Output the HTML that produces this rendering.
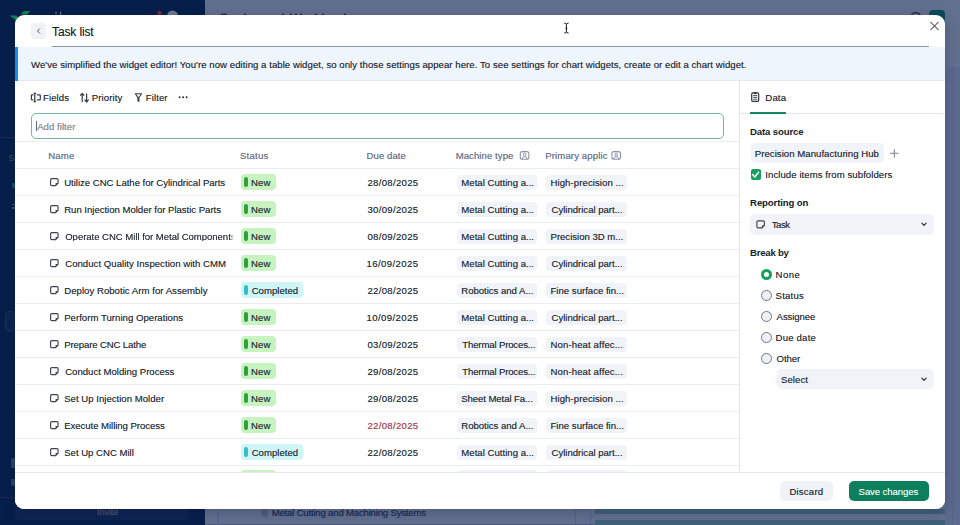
<!DOCTYPE html>
<html><head><meta charset="utf-8">
<style>
*{box-sizing:border-box;margin:0;padding:0}
html,body{width:960px;height:525px;overflow:hidden}
body{position:relative;background:#62708f;font-family:"Liberation Sans",sans-serif;color:#262b36}
.a{position:absolute}
.t{position:absolute;white-space:nowrap;line-height:1;text-shadow:0 0 0.5px rgba(30,35,45,0.5)}
svg{position:absolute;overflow:visible}
</style></head><body>
<div class="a" style="left:0px;top:0px;width:205.00px;height:525.00px;background:#061f4a"></div>
<div class="a" style="left:945px;top:67px;width:15.00px;height:458.00px;background:#5d6a8f"></div>
<div class="a" style="left:952px;top:67px;width:1.00px;height:458.00px;background:#58658a"></div>
<div class="a" style="left:595px;top:509px;width:350.00px;height:5.00px;background:#41607a"></div>
<div class="a" style="left:595px;top:520px;width:350.00px;height:5.00px;background:#41607a"></div>
<div class="a" style="left:574.5px;top:509px;width:16.00px;height:16.00px;border:1px solid #56638a"></div>
<div class="a" style="left:205px;top:523.5px;width:390.00px;height:1.50px;background:#4d597a"></div>
<div class="a" style="left:217px;top:509px;width:1.50px;height:16.00px;background:#5a6892"></div>
<div class="a" style="left:260.8px;top:509.2px;width:7.70px;height:7.70px;background:#525d80;border-radius:50%"></div>
<div class="t" style="left:271.70px;top:508.17px;font-size:9.6px;color:#1a2a5e;font-weight:400;letter-spacing:-0.197px;">Metal Cutting and Machining Systems</div>
<div class="a" style="left:15px;top:503px;width:173.00px;height:17.00px;background:#0e2453;border-radius:3px"></div>
<div class="t" style="left:97.00px;top:506.84px;font-size:9.4px;color:#4f5f86;font-weight:400;letter-spacing:-0.200px;">Invite</div>
<div class="a" style="left:0px;top:136.5px;width:205.00px;height:1.00px;background:#1b2d57"></div>
<div class="t" style="left:8.50px;top:153.88px;font-size:9px;color:#3d4d72;font-weight:400;">S</div>
<div class="a" style="left:11.5px;top:183px;width:3.50px;height:5.00px;background:#18505a;border-radius:1px"></div>
<div class="a" style="left:12px;top:203.5px;width:3.00px;height:1.50px;background:#3d4d72"></div>
<div class="a" style="left:12px;top:207px;width:3.00px;height:1.50px;background:#3d4d72"></div>
<div class="a" style="left:4.5px;top:311px;width:11.50px;height:21.00px;background:#0c2552;border:1px solid #13305e;border-radius:4px"></div>
<div class="a" style="left:11px;top:458px;width:4.00px;height:10.00px;background:#2f4068;border-radius:1px"></div>
<div class="a" style="left:11px;top:479px;width:4.00px;height:7.00px;background:#2f4068;border-radius:1px"></div>
<div class="a" style="left:0px;top:497px;width:205.00px;height:1.00px;background:#1b2d57"></div>
<svg style="left:0;top:0" width="960" height="525"><path d="M9.7 15.6 H16.3 L18.5 18.5 L16.5 21 Z" fill="#11855c"/><path d="M23.7 10.9 H30 L27.5 14.4 H20.6 Z" fill="#11855c"/><circle cx="56" cy="12.8" r="1" fill="#5d6a88"/><rect x="60" y="11.5" width="1.3" height="3.5" fill="#5d6a88"/><circle cx="159.5" cy="13" r="2.2" fill="#7d2647"/><circle cx="172.5" cy="16" r="5.5" fill="#6f7890"/><circle cx="915.8" cy="17.5" r="5" fill="none" stroke="#1f2b57" stroke-width="1.3"/><rect x="929" y="10" width="16" height="16" rx="4" fill="#0a4a5c"/><circle cx="222" cy="14.3" r="0.9" fill="#0d1636"/><circle cx="224" cy="14.3" r="0.9" fill="#0d1636"/><circle cx="226" cy="14.3" r="0.9" fill="#0d1636"/><circle cx="245" cy="14.3" r="0.9" fill="#0d1636"/><circle cx="283" cy="14.3" r="0.9" fill="#0d1636"/><circle cx="291" cy="14.3" r="0.9" fill="#0d1636"/><circle cx="296" cy="14.3" r="0.9" fill="#0d1636"/><circle cx="301" cy="14.3" r="0.9" fill="#0d1636"/><circle cx="316" cy="14.3" r="0.9" fill="#0d1636"/><circle cx="323" cy="14.3" r="0.9" fill="#0d1636"/><circle cx="345" cy="14.3" r="0.9" fill="#0d1636"/></svg>
<div class="a" style="left:15px;top:15px;width:930.00px;height:494.00px;background:#fff;border-radius:9px;box-shadow:0 3px 14px rgba(10,20,50,.25)"></div>
<div class="a" style="left:31px;top:23px;width:15.00px;height:15.50px;background:#eff2f6;border-radius:4px"></div>
<div class="t" style="left:52.00px;top:25.64px;font-size:12px;color:#161b26;font-weight:400;letter-spacing:-0.125px;text-shadow:0 0 0.3px rgba(30,35,45,.4)">Task list</div>
<div class="a" style="left:52px;top:46px;width:877.00px;height:1.00px;background:#8f96a5"></div>
<div class="a" style="left:15px;top:47px;width:930.00px;height:34.00px;background:#eef5fd"></div>
<div class="a" style="left:15px;top:47px;width:3.00px;height:34.00px;background:#1a8cf0"></div>
<div class="a" style="left:18px;top:80px;width:927.00px;height:1.00px;background:#e4e9ef"></div>
<div class="t" style="left:31.00px;top:59.67px;font-size:9.6px;color:#262b36;font-weight:400;letter-spacing:0.048px;">We've simplified the widget editor! You're now editing a table widget, so only those settings appear here. To see settings for chart widgets, create or edit a chart widget.</div>
<div class="t" style="left:43.10px;top:92.87px;font-size:9.6px;color:#262b36;font-weight:400;letter-spacing:0.060px;">Fields</div>
<div class="t" style="left:91.80px;top:92.87px;font-size:9.6px;color:#262b36;font-weight:400;letter-spacing:0.086px;">Priority</div>
<div class="t" style="left:145.80px;top:92.87px;font-size:9.6px;color:#262b36;font-weight:400;letter-spacing:0.080px;">Filter</div>
<div class="a" style="left:30.5px;top:112.5px;width:693.20px;height:26.00px;border:1.5px solid #72b9a0;border-radius:5px"></div>
<div class="a" style="left:36px;top:120.5px;width:1.00px;height:10.80px;background:#5a6f95"></div>
<div class="t" style="left:37.20px;top:121.87px;font-size:9.6px;color:#8d95a4;font-weight:400;letter-spacing:0.033px;">Add filter</div>
<div class="a" style="left:15px;top:141px;width:724.00px;height:1.00px;background:#e9edf2"></div>
<div class="a" style="left:15px;top:168px;width:724.00px;height:1.00px;background:#e9edf2"></div>
<div class="a" style="left:15px;top:195px;width:724.00px;height:1.00px;background:#e9edf2"></div>
<div class="a" style="left:15px;top:222px;width:724.00px;height:1.00px;background:#e9edf2"></div>
<div class="a" style="left:15px;top:249px;width:724.00px;height:1.00px;background:#e9edf2"></div>
<div class="a" style="left:15px;top:276px;width:724.00px;height:1.00px;background:#e9edf2"></div>
<div class="a" style="left:15px;top:303px;width:724.00px;height:1.00px;background:#e9edf2"></div>
<div class="a" style="left:15px;top:330px;width:724.00px;height:1.00px;background:#e9edf2"></div>
<div class="a" style="left:15px;top:357px;width:724.00px;height:1.00px;background:#e9edf2"></div>
<div class="a" style="left:15px;top:384px;width:724.00px;height:1.00px;background:#e9edf2"></div>
<div class="a" style="left:15px;top:411px;width:724.00px;height:1.00px;background:#e9edf2"></div>
<div class="a" style="left:15px;top:438px;width:724.00px;height:1.00px;background:#e9edf2"></div>
<div class="a" style="left:15px;top:465px;width:724.00px;height:1.00px;background:#e9edf2"></div>
<div class="a" style="left:739px;top:81px;width:1.00px;height:391.00px;background:#e3e7ec"></div>
<div class="t" style="left:48.25px;top:151.17px;font-size:9.6px;color:#6e7894;font-weight:400;letter-spacing:0.167px;">Name</div>
<div class="t" style="left:240.00px;top:151.17px;font-size:9.6px;color:#6e7894;font-weight:400;letter-spacing:0.220px;">Status</div>
<div class="t" style="left:366.50px;top:151.17px;font-size:9.6px;color:#6e7894;font-weight:400;letter-spacing:0.071px;">Due date</div>
<div class="t" style="left:455.70px;top:151.17px;font-size:9.6px;color:#6e7894;font-weight:400;letter-spacing:0.055px;">Machine type</div>
<div class="t" style="left:545.25px;top:151.17px;font-size:9.6px;color:#6e7894;font-weight:400;letter-spacing:0.112px;">Primary applic</div>
<div class="t" style="left:64.20px;top:177.57px;font-size:9.6px;color:#262b36;font-weight:400;letter-spacing:-0.029px;">Utilize CNC Lathe for Cylindrical Parts</div>
<div class="a" style="left:241px;top:174.2px;width:35.00px;height:15.60px;background:#c6f3c0;border-radius:4px"></div>
<div class="a" style="left:243.7px;top:176.7px;width:4.00px;height:10.70px;background:#30a03b;border-radius:2px"></div>
<div class="t" style="left:251.00px;top:177.57px;font-size:9.6px;color:#262b36;font-weight:400;letter-spacing:0.100px;">New</div>
<div class="t" style="left:367.50px;top:177.57px;font-size:9.6px;color:#262b36;font-weight:400;letter-spacing:0.289px;">28/08/2025</div>
<div class="a" style="left:457px;top:174.6px;width:80.40px;height:15.20px;background:#f0f3f7;border-radius:4px"></div>
<div class="t" style="left:461.30px;top:177.57px;font-size:9.6px;color:#262b36;font-weight:400;letter-spacing:0.012px;">Metal Cutting a...</div>
<div class="a" style="left:546.4px;top:174.6px;width:80.50px;height:15.20px;background:#f0f3f7;border-radius:4px"></div>
<div class="t" style="left:550.50px;top:177.57px;font-size:9.6px;color:#262b36;font-weight:400;letter-spacing:0.074px;">High-precision ...</div>
<div class="t" style="left:64.20px;top:204.57px;font-size:9.6px;color:#262b36;font-weight:400;letter-spacing:-0.027px;">Run Injection Molder for Plastic Parts</div>
<div class="a" style="left:241px;top:201.2px;width:35.00px;height:15.60px;background:#c6f3c0;border-radius:4px"></div>
<div class="a" style="left:243.7px;top:203.7px;width:4.00px;height:10.70px;background:#30a03b;border-radius:2px"></div>
<div class="t" style="left:251.00px;top:204.57px;font-size:9.6px;color:#262b36;font-weight:400;letter-spacing:0.100px;">New</div>
<div class="t" style="left:367.50px;top:204.57px;font-size:9.6px;color:#262b36;font-weight:400;letter-spacing:0.289px;">30/09/2025</div>
<div class="a" style="left:457px;top:201.6px;width:80.40px;height:15.20px;background:#f0f3f7;border-radius:4px"></div>
<div class="t" style="left:461.30px;top:204.57px;font-size:9.6px;color:#262b36;font-weight:400;letter-spacing:0.012px;">Metal Cutting a...</div>
<div class="a" style="left:546.4px;top:201.6px;width:80.50px;height:15.20px;background:#f0f3f7;border-radius:4px"></div>
<div class="t" style="left:551.50px;top:204.57px;font-size:9.6px;color:#262b36;font-weight:400;letter-spacing:-0.017px;">Cylindrical part...</div>
<div class="t" style="left:65.20px;top:231.57px;font-size:9.6px;color:#262b36;font-weight:400;letter-spacing:-0.051px;width:168.5px;overflow:hidden;-webkit-mask-image:linear-gradient(to right,#000 97.6%,transparent)">Operate CNC Mill for Metal Components</div>
<div class="a" style="left:241px;top:228.2px;width:35.00px;height:15.60px;background:#c6f3c0;border-radius:4px"></div>
<div class="a" style="left:243.7px;top:230.7px;width:4.00px;height:10.70px;background:#30a03b;border-radius:2px"></div>
<div class="t" style="left:251.00px;top:231.57px;font-size:9.6px;color:#262b36;font-weight:400;letter-spacing:0.100px;">New</div>
<div class="t" style="left:367.50px;top:231.57px;font-size:9.6px;color:#262b36;font-weight:400;letter-spacing:0.289px;">08/09/2025</div>
<div class="a" style="left:457px;top:228.6px;width:80.40px;height:15.20px;background:#f0f3f7;border-radius:4px"></div>
<div class="t" style="left:461.30px;top:231.57px;font-size:9.6px;color:#262b36;font-weight:400;letter-spacing:0.012px;">Metal Cutting a...</div>
<div class="a" style="left:546.4px;top:228.6px;width:80.50px;height:15.20px;background:#f0f3f7;border-radius:4px"></div>
<div class="t" style="left:550.50px;top:231.57px;font-size:9.6px;color:#262b36;font-weight:400;letter-spacing:-0.019px;">Precision 3D m...</div>
<div class="t" style="left:65.20px;top:258.57px;font-size:9.6px;color:#262b36;font-weight:400;letter-spacing:0.026px;">Conduct Quality Inspection with CMM</div>
<div class="a" style="left:241px;top:255.2px;width:35.00px;height:15.60px;background:#c6f3c0;border-radius:4px"></div>
<div class="a" style="left:243.7px;top:257.7px;width:4.00px;height:10.70px;background:#30a03b;border-radius:2px"></div>
<div class="t" style="left:251.00px;top:258.57px;font-size:9.6px;color:#262b36;font-weight:400;letter-spacing:0.100px;">New</div>
<div class="t" style="left:366.50px;top:258.57px;font-size:9.6px;color:#262b36;font-weight:400;letter-spacing:0.400px;">16/09/2025</div>
<div class="a" style="left:457px;top:255.6px;width:80.40px;height:15.20px;background:#f0f3f7;border-radius:4px"></div>
<div class="t" style="left:461.30px;top:258.57px;font-size:9.6px;color:#262b36;font-weight:400;letter-spacing:0.012px;">Metal Cutting a...</div>
<div class="a" style="left:546.4px;top:255.6px;width:80.50px;height:15.20px;background:#f0f3f7;border-radius:4px"></div>
<div class="t" style="left:551.50px;top:258.57px;font-size:9.6px;color:#262b36;font-weight:400;letter-spacing:-0.017px;">Cylindrical part...</div>
<div class="t" style="left:64.20px;top:285.57px;font-size:9.6px;color:#262b36;font-weight:400;letter-spacing:0.030px;">Deploy Robotic Arm for Assembly</div>
<div class="a" style="left:241px;top:282.2px;width:62.30px;height:15.60px;background:#cff6f6;border-radius:4px"></div>
<div class="a" style="left:243.7px;top:284.7px;width:4.00px;height:10.70px;background:#36bcc6;border-radius:2px"></div>
<div class="t" style="left:251.70px;top:285.57px;font-size:9.6px;color:#262b36;font-weight:400;letter-spacing:0.000px;">Completed</div>
<div class="t" style="left:367.50px;top:285.57px;font-size:9.6px;color:#262b36;font-weight:400;letter-spacing:0.289px;">22/08/2025</div>
<div class="a" style="left:457px;top:282.6px;width:80.40px;height:15.20px;background:#f0f3f7;border-radius:4px"></div>
<div class="t" style="left:461.30px;top:285.57px;font-size:9.6px;color:#262b36;font-weight:400;letter-spacing:-0.031px;">Robotics and A...</div>
<div class="a" style="left:546.4px;top:282.6px;width:80.50px;height:15.20px;background:#f0f3f7;border-radius:4px"></div>
<div class="t" style="left:550.50px;top:285.57px;font-size:9.6px;color:#262b36;font-weight:400;letter-spacing:0.000px;">Fine surface fin...</div>
<div class="t" style="left:64.20px;top:312.57px;font-size:9.6px;color:#262b36;font-weight:400;letter-spacing:0.020px;">Perform Turning Operations</div>
<div class="a" style="left:241px;top:309.2px;width:35.00px;height:15.60px;background:#c6f3c0;border-radius:4px"></div>
<div class="a" style="left:243.7px;top:311.7px;width:4.00px;height:10.70px;background:#30a03b;border-radius:2px"></div>
<div class="t" style="left:251.00px;top:312.57px;font-size:9.6px;color:#262b36;font-weight:400;letter-spacing:0.100px;">New</div>
<div class="t" style="left:366.50px;top:312.57px;font-size:9.6px;color:#262b36;font-weight:400;letter-spacing:0.400px;">10/09/2025</div>
<div class="a" style="left:457px;top:309.6px;width:80.40px;height:15.20px;background:#f0f3f7;border-radius:4px"></div>
<div class="t" style="left:461.30px;top:312.57px;font-size:9.6px;color:#262b36;font-weight:400;letter-spacing:0.012px;">Metal Cutting a...</div>
<div class="a" style="left:546.4px;top:309.6px;width:80.50px;height:15.20px;background:#f0f3f7;border-radius:4px"></div>
<div class="t" style="left:551.50px;top:312.57px;font-size:9.6px;color:#262b36;font-weight:400;letter-spacing:-0.017px;">Cylindrical part...</div>
<div class="t" style="left:64.20px;top:339.57px;font-size:9.6px;color:#262b36;font-weight:400;letter-spacing:-0.131px;">Prepare CNC Lathe</div>
<div class="a" style="left:241px;top:336.2px;width:35.00px;height:15.60px;background:#c6f3c0;border-radius:4px"></div>
<div class="a" style="left:243.7px;top:338.7px;width:4.00px;height:10.70px;background:#30a03b;border-radius:2px"></div>
<div class="t" style="left:251.00px;top:339.57px;font-size:9.6px;color:#262b36;font-weight:400;letter-spacing:0.100px;">New</div>
<div class="t" style="left:367.50px;top:339.57px;font-size:9.6px;color:#262b36;font-weight:400;letter-spacing:0.289px;">03/09/2025</div>
<div class="a" style="left:457px;top:336.6px;width:80.40px;height:15.20px;background:#f0f3f7;border-radius:4px"></div>
<div class="t" style="left:462.30px;top:339.57px;font-size:9.6px;color:#262b36;font-weight:400;letter-spacing:-0.156px;">Thermal Proces...</div>
<div class="a" style="left:546.4px;top:336.6px;width:80.50px;height:15.20px;background:#f0f3f7;border-radius:4px"></div>
<div class="t" style="left:550.50px;top:339.57px;font-size:9.6px;color:#262b36;font-weight:400;letter-spacing:0.106px;">Non-heat affec...</div>
<div class="t" style="left:65.20px;top:366.57px;font-size:9.6px;color:#262b36;font-weight:400;letter-spacing:-0.005px;">Conduct Molding Process</div>
<div class="a" style="left:241px;top:363.2px;width:35.00px;height:15.60px;background:#c6f3c0;border-radius:4px"></div>
<div class="a" style="left:243.7px;top:365.7px;width:4.00px;height:10.70px;background:#30a03b;border-radius:2px"></div>
<div class="t" style="left:251.00px;top:366.57px;font-size:9.6px;color:#262b36;font-weight:400;letter-spacing:0.100px;">New</div>
<div class="t" style="left:367.50px;top:366.57px;font-size:9.6px;color:#262b36;font-weight:400;letter-spacing:0.289px;">29/08/2025</div>
<div class="a" style="left:457px;top:363.6px;width:80.40px;height:15.20px;background:#f0f3f7;border-radius:4px"></div>
<div class="t" style="left:462.30px;top:366.57px;font-size:9.6px;color:#262b36;font-weight:400;letter-spacing:-0.156px;">Thermal Proces...</div>
<div class="a" style="left:546.4px;top:363.6px;width:80.50px;height:15.20px;background:#f0f3f7;border-radius:4px"></div>
<div class="t" style="left:550.50px;top:366.57px;font-size:9.6px;color:#262b36;font-weight:400;letter-spacing:0.106px;">Non-heat affec...</div>
<div class="t" style="left:64.20px;top:393.57px;font-size:9.6px;color:#262b36;font-weight:400;letter-spacing:0.009px;">Set Up Injection Molder</div>
<div class="a" style="left:241px;top:390.2px;width:35.00px;height:15.60px;background:#c6f3c0;border-radius:4px"></div>
<div class="a" style="left:243.7px;top:392.7px;width:4.00px;height:10.70px;background:#30a03b;border-radius:2px"></div>
<div class="t" style="left:251.00px;top:393.57px;font-size:9.6px;color:#262b36;font-weight:400;letter-spacing:0.100px;">New</div>
<div class="t" style="left:367.50px;top:393.57px;font-size:9.6px;color:#262b36;font-weight:400;letter-spacing:0.289px;">29/08/2025</div>
<div class="a" style="left:457px;top:390.6px;width:80.40px;height:15.20px;background:#f0f3f7;border-radius:4px"></div>
<div class="t" style="left:461.30px;top:393.57px;font-size:9.6px;color:#262b36;font-weight:400;letter-spacing:-0.094px;">Sheet Metal Fa...</div>
<div class="a" style="left:546.4px;top:390.6px;width:80.50px;height:15.20px;background:#f0f3f7;border-radius:4px"></div>
<div class="t" style="left:550.50px;top:393.57px;font-size:9.6px;color:#262b36;font-weight:400;letter-spacing:0.074px;">High-precision ...</div>
<div class="t" style="left:64.20px;top:420.57px;font-size:9.6px;color:#262b36;font-weight:400;letter-spacing:-0.055px;">Execute Milling Process</div>
<div class="a" style="left:241px;top:417.2px;width:35.00px;height:15.60px;background:#c6f3c0;border-radius:4px"></div>
<div class="a" style="left:243.7px;top:419.7px;width:4.00px;height:10.70px;background:#30a03b;border-radius:2px"></div>
<div class="t" style="left:251.00px;top:420.57px;font-size:9.6px;color:#262b36;font-weight:400;letter-spacing:0.100px;">New</div>
<div class="t" style="left:367.50px;top:420.57px;font-size:9.6px;color:#c0404f;font-weight:400;letter-spacing:0.289px;">22/08/2025</div>
<div class="a" style="left:457px;top:417.6px;width:80.40px;height:15.20px;background:#f0f3f7;border-radius:4px"></div>
<div class="t" style="left:461.30px;top:420.57px;font-size:9.6px;color:#262b36;font-weight:400;letter-spacing:-0.031px;">Robotics and A...</div>
<div class="a" style="left:546.4px;top:417.6px;width:80.50px;height:15.20px;background:#f0f3f7;border-radius:4px"></div>
<div class="t" style="left:550.50px;top:420.57px;font-size:9.6px;color:#262b36;font-weight:400;letter-spacing:0.000px;">Fine surface fin...</div>
<div class="t" style="left:64.20px;top:447.57px;font-size:9.6px;color:#262b36;font-weight:400;letter-spacing:-0.014px;">Set Up CNC Mill</div>
<div class="a" style="left:241px;top:444.2px;width:62.30px;height:15.60px;background:#cff6f6;border-radius:4px"></div>
<div class="a" style="left:243.7px;top:446.7px;width:4.00px;height:10.70px;background:#36bcc6;border-radius:2px"></div>
<div class="t" style="left:251.70px;top:447.57px;font-size:9.6px;color:#262b36;font-weight:400;letter-spacing:0.000px;">Completed</div>
<div class="t" style="left:367.50px;top:447.57px;font-size:9.6px;color:#262b36;font-weight:400;letter-spacing:0.289px;">22/08/2025</div>
<div class="a" style="left:457px;top:444.6px;width:80.40px;height:15.20px;background:#f0f3f7;border-radius:4px"></div>
<div class="t" style="left:461.30px;top:447.57px;font-size:9.6px;color:#262b36;font-weight:400;letter-spacing:0.012px;">Metal Cutting a...</div>
<div class="a" style="left:546.4px;top:444.6px;width:80.50px;height:15.20px;background:#f0f3f7;border-radius:4px"></div>
<div class="t" style="left:551.50px;top:447.57px;font-size:9.6px;color:#262b36;font-weight:400;letter-spacing:-0.017px;">Cylindrical part...</div>
<div class="a" style="left:241px;top:469.9px;width:35.00px;height:16.90px;background:#c8f2c2;border-radius:4px"></div>
<div class="a" style="left:457px;top:469.9px;width:80.40px;height:16.90px;background:#f0f3f7;border-radius:4px"></div>
<div class="a" style="left:546.4px;top:469.9px;width:80.50px;height:16.90px;background:#f0f3f7;border-radius:4px"></div>
<div class="a" style="left:15px;top:472px;width:930.00px;height:37.00px;background:#fff;border-radius:0 0 9px 9px"></div>
<div class="a" style="left:15px;top:472px;width:930.00px;height:1.00px;background:#e3e7ec"></div>
<div class="a" style="left:740px;top:113px;width:205.00px;height:1.00px;background:#e3e7ec"></div>
<div class="a" style="left:750px;top:112px;width:36.00px;height:2.00px;background:#13875f"></div>
<div class="t" style="left:765.30px;top:93.27px;font-size:9.6px;color:#262b36;font-weight:400;letter-spacing:0.150px;">Data</div>
<div class="t" style="left:750.10px;top:126.97px;font-size:9.6px;color:#161b26;font-weight:700;letter-spacing:-0.150px;text-shadow:none">Data source</div>
<div class="a" style="left:750.5px;top:143px;width:133.30px;height:20.30px;background:#f0f3f7;border-radius:5px"></div>
<div class="t" style="left:754.80px;top:149.07px;font-size:9.6px;color:#262b36;font-weight:400;letter-spacing:0.035px;">Precision Manufacturing Hub</div>
<div class="a" style="left:750.5px;top:169.3px;width:10.30px;height:10.40px;background:#17a05d;border-radius:2px"></div>
<div class="t" style="left:765.30px;top:169.97px;font-size:9.6px;color:#262b36;font-weight:400;letter-spacing:0.061px;">Include items from subfolders</div>
<div class="t" style="left:750.10px;top:198.27px;font-size:9.6px;color:#161b26;font-weight:700;letter-spacing:-0.136px;text-shadow:none">Reporting on</div>
<div class="a" style="left:750.3px;top:214px;width:183.70px;height:20.80px;background:#f0f3f7;border-radius:5px"></div>
<div class="t" style="left:771.75px;top:220.17px;font-size:9.6px;color:#262b36;font-weight:400;letter-spacing:-0.483px;">Task</div>
<div class="t" style="left:750.10px;top:247.87px;font-size:9.6px;color:#161b26;font-weight:700;letter-spacing:-0.243px;text-shadow:none">Break by</div>
<div class="a" style="left:760.6px;top:268.59999999999997px;width:11.20px;height:11.20px;background:#fff;border:3.6px solid #17a05d;border-radius:50%"></div>
<div class="t" style="left:775.60px;top:269.87px;font-size:9.6px;color:#262b36;font-weight:400;letter-spacing:0.433px;">None</div>
<div class="a" style="left:760.6px;top:289.7px;width:11.20px;height:11.20px;background:#eef2f7;border:1.2px solid #6f7787;border-radius:50%"></div>
<div class="t" style="left:775.60px;top:290.97px;font-size:9.6px;color:#262b36;font-weight:400;letter-spacing:0.180px;">Status</div>
<div class="a" style="left:760.6px;top:310.79999999999995px;width:11.20px;height:11.20px;background:#eef2f7;border:1.2px solid #6f7787;border-radius:50%"></div>
<div class="t" style="left:776.60px;top:312.07px;font-size:9.6px;color:#262b36;font-weight:400;letter-spacing:-0.100px;">Assignee</div>
<div class="a" style="left:760.6px;top:331.9px;width:11.20px;height:11.20px;background:#eef2f7;border:1.2px solid #6f7787;border-radius:50%"></div>
<div class="t" style="left:775.60px;top:333.17px;font-size:9.6px;color:#262b36;font-weight:400;letter-spacing:0.186px;">Due date</div>
<div class="a" style="left:760.6px;top:353.0px;width:11.20px;height:11.20px;background:#eef2f7;border:1.2px solid #6f7787;border-radius:50%"></div>
<div class="t" style="left:776.60px;top:354.27px;font-size:9.6px;color:#262b36;font-weight:400;letter-spacing:-0.100px;">Other</div>
<div class="a" style="left:776.6px;top:369.2px;width:157.40px;height:20.30px;background:#f0f3f7;border-radius:5px"></div>
<div class="t" style="left:781.00px;top:375.27px;font-size:9.6px;color:#262b36;font-weight:400;letter-spacing:0.060px;">Select</div>
<div class="a" style="left:779.8px;top:480.6px;width:53.40px;height:20.80px;background:#eff2f6;border-radius:5px"></div>
<div class="t" style="left:789.40px;top:486.87px;font-size:9.6px;color:#262b36;font-weight:400;letter-spacing:0.200px;">Discard</div>
<div class="a" style="left:848.6px;top:480.6px;width:80.60px;height:20.80px;background:#0e7f5b;border-radius:5px"></div>
<div class="t" style="left:858.60px;top:486.87px;font-size:9.6px;color:#f4fbf7;font-weight:400;letter-spacing:-0.109px;text-shadow:0 0 0.5px rgba(255,255,255,.5)">Save changes</div>
<svg style="left:0;top:0" width="960" height="525"><path d="M40 28.5 L37.5 31 L40 33.5" fill="none" stroke="#4b5260" stroke-width="1.0"/><path d="M930.5 22 L938.5 30 M938.5 22 L930.5 30" fill="none" stroke="#3a404c" stroke-width="1.05"/><path d="M51.800000000000004 178.6 H56.9 Q58.1 178.6 58.1 179.79999999999998 V183.1 L55.6 185.6 H51.800000000000004 Q50.6 185.6 50.6 184.4 V179.79999999999998 Q50.6 178.6 51.800000000000004 178.6 Z" fill="none" stroke="#3d4350" stroke-width="1.15" stroke-linejoin="round"/><path d="M58.4 183.1 H55.6 V185.9 Z" fill="#3d4350"/><path d="M51.800000000000004 205.6 H56.9 Q58.1 205.6 58.1 206.79999999999998 V210.1 L55.6 212.6 H51.800000000000004 Q50.6 212.6 50.6 211.4 V206.79999999999998 Q50.6 205.6 51.800000000000004 205.6 Z" fill="none" stroke="#3d4350" stroke-width="1.15" stroke-linejoin="round"/><path d="M58.4 210.1 H55.6 V212.9 Z" fill="#3d4350"/><path d="M51.800000000000004 232.6 H56.9 Q58.1 232.6 58.1 233.79999999999998 V237.1 L55.6 239.6 H51.800000000000004 Q50.6 239.6 50.6 238.4 V233.79999999999998 Q50.6 232.6 51.800000000000004 232.6 Z" fill="none" stroke="#3d4350" stroke-width="1.15" stroke-linejoin="round"/><path d="M58.4 237.1 H55.6 V239.9 Z" fill="#3d4350"/><path d="M51.800000000000004 259.6 H56.9 Q58.1 259.6 58.1 260.8 V264.1 L55.6 266.6 H51.800000000000004 Q50.6 266.6 50.6 265.40000000000003 V260.8 Q50.6 259.6 51.800000000000004 259.6 Z" fill="none" stroke="#3d4350" stroke-width="1.15" stroke-linejoin="round"/><path d="M58.4 264.1 H55.6 V266.90000000000003 Z" fill="#3d4350"/><path d="M51.800000000000004 286.6 H56.9 Q58.1 286.6 58.1 287.8 V291.1 L55.6 293.6 H51.800000000000004 Q50.6 293.6 50.6 292.40000000000003 V287.8 Q50.6 286.6 51.800000000000004 286.6 Z" fill="none" stroke="#3d4350" stroke-width="1.15" stroke-linejoin="round"/><path d="M58.4 291.1 H55.6 V293.90000000000003 Z" fill="#3d4350"/><path d="M51.800000000000004 313.6 H56.9 Q58.1 313.6 58.1 314.8 V318.1 L55.6 320.6 H51.800000000000004 Q50.6 320.6 50.6 319.40000000000003 V314.8 Q50.6 313.6 51.800000000000004 313.6 Z" fill="none" stroke="#3d4350" stroke-width="1.15" stroke-linejoin="round"/><path d="M58.4 318.1 H55.6 V320.90000000000003 Z" fill="#3d4350"/><path d="M51.800000000000004 340.6 H56.9 Q58.1 340.6 58.1 341.8 V345.1 L55.6 347.6 H51.800000000000004 Q50.6 347.6 50.6 346.40000000000003 V341.8 Q50.6 340.6 51.800000000000004 340.6 Z" fill="none" stroke="#3d4350" stroke-width="1.15" stroke-linejoin="round"/><path d="M58.4 345.1 H55.6 V347.90000000000003 Z" fill="#3d4350"/><path d="M51.800000000000004 367.6 H56.9 Q58.1 367.6 58.1 368.8 V372.1 L55.6 374.6 H51.800000000000004 Q50.6 374.6 50.6 373.40000000000003 V368.8 Q50.6 367.6 51.800000000000004 367.6 Z" fill="none" stroke="#3d4350" stroke-width="1.15" stroke-linejoin="round"/><path d="M58.4 372.1 H55.6 V374.90000000000003 Z" fill="#3d4350"/><path d="M51.800000000000004 394.6 H56.9 Q58.1 394.6 58.1 395.8 V399.1 L55.6 401.6 H51.800000000000004 Q50.6 401.6 50.6 400.40000000000003 V395.8 Q50.6 394.6 51.800000000000004 394.6 Z" fill="none" stroke="#3d4350" stroke-width="1.15" stroke-linejoin="round"/><path d="M58.4 399.1 H55.6 V401.90000000000003 Z" fill="#3d4350"/><path d="M51.800000000000004 421.6 H56.9 Q58.1 421.6 58.1 422.8 V426.1 L55.6 428.6 H51.800000000000004 Q50.6 428.6 50.6 427.40000000000003 V422.8 Q50.6 421.6 51.800000000000004 421.6 Z" fill="none" stroke="#3d4350" stroke-width="1.15" stroke-linejoin="round"/><path d="M58.4 426.1 H55.6 V428.90000000000003 Z" fill="#3d4350"/><path d="M51.800000000000004 448.6 H56.9 Q58.1 448.6 58.1 449.8 V453.1 L55.6 455.6 H51.800000000000004 Q50.6 455.6 50.6 454.40000000000003 V449.8 Q50.6 448.6 51.800000000000004 448.6 Z" fill="none" stroke="#3d4350" stroke-width="1.15" stroke-linejoin="round"/><path d="M58.4 453.1 H55.6 V455.90000000000003 Z" fill="#3d4350"/><path d="M33.4 94.9 H32.1 Q31.4 94.9 31.4 95.6 V99.2 Q31.4 99.9 32.1 99.9 H33.4 M36.8 94.9 H39.6 Q40.3 94.9 40.3 95.6 V99.2 Q40.3 99.9 39.6 99.9 H36.8" fill="none" stroke="#343a47" stroke-width="1.2"/><path d="M34.8 93.4 V101.6 M33.6 93.4 H36 M33.6 101.6 H36" fill="none" stroke="#343a47" stroke-width="1.2"/><path d="M82.2 94 V102 M80.2 95.7 L82.2 93.4 L84.2 95.7 M86.6 93.4 V101.4 M84.6 99.7 L86.6 102 L88.6 99.7" fill="none" stroke="#343a47" stroke-width="1.2" stroke-linejoin="round"/><path d="M135.4 93.8 H141.6 L138.9 97.6 V101.4 L137.9 100.8 V97.6 Z" fill="none" stroke="#343a47" stroke-width="1.05" stroke-linejoin="round"/><circle cx="179.6" cy="97.3" r="0.95" fill="#1f2430"/><circle cx="183.1" cy="97.3" r="0.95" fill="#1f2430"/><circle cx="186.6" cy="97.3" r="0.95" fill="#1f2430"/><rect x="520.3" y="151.6" width="8.6" height="7.6" rx="2" fill="none" stroke="#8a93a8" stroke-width="1.1"/><circle cx="524.5999999999999" cy="154.4" r="1.3" fill="none" stroke="#8a93a8" stroke-width="1"/><path d="M522.0 159 Q522.4 156.6 524.5999999999999 156.6 Q526.8 156.6 527.1999999999999 159" fill="none" stroke="#8a93a8" stroke-width="1"/><rect x="611.9" y="151.6" width="8.6" height="7.6" rx="2" fill="none" stroke="#8a93a8" stroke-width="1.1"/><circle cx="616.1999999999999" cy="154.4" r="1.3" fill="none" stroke="#8a93a8" stroke-width="1"/><path d="M613.6 159 Q614.0 156.6 616.1999999999999 156.6 Q618.4 156.6 618.8 159" fill="none" stroke="#8a93a8" stroke-width="1"/><rect x="751.7" y="92.9" width="7" height="8.5" rx="1.3" fill="none" stroke="#2d3340" stroke-width="1.2"/><rect x="753.8" y="92.2" width="2.8" height="1.6" fill="#2d3340"/><path d="M753.2 95.4 H757.2 M753.2 97.3 H757.2 M753.2 99.2 H757.2" stroke="#2d3340" stroke-width="0.9"/><path d="M894.3 149.2 V157.5 M890.1 153.3 H898.5" stroke="#7a8190" stroke-width="1"/><path d="M752.6 174.6 L754.8 177 L758.6 172.2" fill="none" stroke="#fff" stroke-width="1.5" stroke-linecap="round" stroke-linejoin="round"/><path d="M758.1 220.9 H763.1999999999999 Q764.4 220.9 764.4 222.1 V225.4 L761.9 227.9 H758.1 Q756.9 227.9 756.9 226.70000000000002 V222.1 Q756.9 220.9 758.1 220.9 Z" fill="none" stroke="#3d4350" stroke-width="1.15" stroke-linejoin="round"/><path d="M764.6999999999999 225.4 H761.9 V228.20000000000002 Z" fill="#3d4350"/><path d="M921.9 223.2 L924 225.3 L926.1 223.2" fill="none" stroke="#262b36" stroke-width="1.15" stroke-linecap="round" stroke-linejoin="round"/><path d="M921.9 378.2 L924 380.3 L926.1 378.2" fill="none" stroke="#262b36" stroke-width="1.15" stroke-linecap="round" stroke-linejoin="round"/><path d="M564.2 23.1 Q566.4 23.2 566.4 24.6 V31.6 Q566.4 33 564.2 33.1 M568.6 23.1 Q566.4 23.2 566.4 24.6 M568.6 33.1 Q566.4 33 566.4 31.6 M565.5 28.3 H567.3" fill="none" stroke="#15171c" stroke-width="1"/></svg>
</body></html>
